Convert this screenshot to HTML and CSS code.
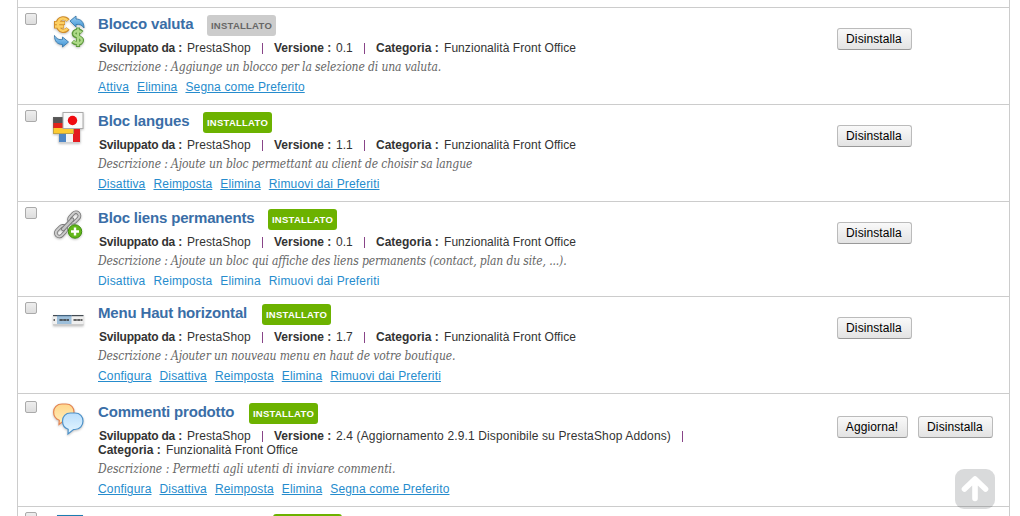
FILE: index.html
```
<!DOCTYPE html>
<html lang="it">
<head>
    <meta charset="UTF-8">
    <meta name="viewport" content="width=device-width, initial-scale=1.0">
    <title>Moduli</title>
    <link rel="stylesheet" href="styles.css">
</head>
<body>
    <div class="module-list">
        <div class="module first"></div>
        <div class="module">
            <input type="checkbox" class="check">
            <svg class="icon" viewBox="0 0 32 34">
                <defs>
                    <linearGradient id="blue" x1="0" y1="0" x2="0" y2="1"><stop offset="0" stop-color="#9bd0f5"/><stop offset="1" stop-color="#3f92d2"/></linearGradient>
                </defs>
                <g fill="none" stroke-linecap="butt">
                    <path d="M15 5.5C13.500 3.500 11.500 3 9.500 3.300C5.500 4 4.500 7 4.500 9.500S6 15.500 9.500 16C11.500 16.300 13.500 15.500 15 13.500M1 8H12M1 11.500H11" stroke="#cf8d2d" stroke-width="4"/>
                    <path d="M14.500 5.500C13 3.700 11.500 3.200 9.500 3.500C6 4 5 7 5 9.500S6.500 15.300 9.500 15.700C11.500 16 13 15.300 14.500 13.500M2 8H11.500M2 11.500H10.500" stroke="#fdd063" stroke-width="2.400"/>
                    <path d="M29 17.500C27.500 16 26 15.500 24.500 15.700C21.500 16 20.500 17.500 21 19.500C21.800 22 28.500 21.500 29 25C29.200 27.500 27 28.500 24.500 28.500C22.500 28.500 21 27.800 19.500 26.500M25 12.500V32" stroke="#5c983c" stroke-width="4.200"/>
                    <path d="M28.500 17.500C27.500 16.500 26 16 24.500 16C21.800 16.200 21 17.500 21.300 19.200C22 21.500 28.700 21.500 28.800 25C29 27.200 27 28.200 24.500 28.200C22.500 28.200 21.500 27.500 20 26.500M25 13.500V31" stroke="#add987" stroke-width="2.300"/>
                </g>
                <path d="M17 6L23 1V4C28 4 31 7 31 13C29 10 27 9 23 9.500V12Z" fill="url(#blue)" stroke="#3979ad" stroke-width=".9"/>
                <path d="M15.500 27L9.500 32V29.500C4 29.500 1.500 26 1.500 20.500C3.500 24 6 25 9.500 24.500V22Z" fill="url(#blue)" stroke="#3979ad" stroke-width=".9"/>
            </svg>
            <div class="info">
                <div class="head"><h3 class="t1">Blocco valuta</h3><span class="badge off">INSTALLATO</span></div>
                <p class="meta"><b class="dev">Sviluppato da :</b><span class="shop">PrestaShop</span><i class="sep"></i><b class="ver">Versione :</b><span class="num">0.1</span><i class="sep"></i><b class="cat">Categoria :</b><span class="front">Funzionalità Front Office</span></p>
                <p class="desc">Descrizione : Aggiunge un blocco per la selezione di una valuta.</p>
                <p class="links"><a href="#">Attiva</a><a href="#">Elimina</a><a href="#">Segna come Preferito</a></p>
            </div>
            <div class="actions"><button>Disinstalla</button></div>
        </div>
        <div class="module">
            <input type="checkbox" class="check">
            <svg class="icon" viewBox="0 0 32 34">
                <rect x="6" y="17" width="21" height="13.500" fill="#f4f4f4" stroke="#ccc" stroke-width=".7"/>
                <rect x="6" y="17" width="7" height="13" fill="#4f86c4"/>
                <rect x="20" y="17" width="7" height="13" fill="#e41c20"/>
                <rect x="0" y="5" width="21" height="6" fill="#555"/>
                <rect x="0" y="11" width="21" height="5" fill="#e2231a"/>
                <rect x="0" y="16" width="21" height="6" fill="#fccb32"/>
                <rect x=".5" y="5.500" width="20" height="16" fill="none" stroke="#666" stroke-opacity=".4"/>
                <rect x="10" y=".5" width="20" height="16" fill="#fafafa" stroke="#aaa"/>
                <circle cx="19.500" cy="8.500" r="4.700" fill="#f00a10"/>
            </svg>
            <div class="info">
                <div class="head"><h3 class="t2">Bloc langues</h3><span class="badge">INSTALLATO</span></div>
                <p class="meta"><b class="dev">Sviluppato da :</b><span class="shop">PrestaShop</span><i class="sep"></i><b class="ver">Versione :</b><span class="num">1.1</span><i class="sep"></i><b class="cat">Categoria :</b><span class="front">Funzionalità Front Office</span></p>
                <p class="desc">Descrizione : Ajoute un bloc permettant au client de choisir sa langue</p>
                <p class="links"><a href="#">Disattiva</a><a href="#">Reimposta</a><a href="#">Elimina</a><a href="#">Rimuovi dai Preferiti</a></p>
            </div>
            <div class="actions"><button>Disinstalla</button></div>
        </div>
        <div class="module short">
            <input type="checkbox" class="check">
            <svg class="icon" viewBox="0 0 32 34">
                <g fill="none" transform="rotate(-46 15 15)">
                    <g stroke="#777" stroke-width="3.600">
                        <rect x="-1" y="11.500" width="12" height="7" rx="3.500"/>
                        <rect x="18" y="11.500" width="12" height="7" rx="3.500"/>
                    </g>
                    <g stroke="#ccc" stroke-width="2">
                        <rect x="-1" y="11.500" width="12" height="7" rx="3.500"/>
                        <rect x="18" y="11.500" width="12" height="7" rx="3.500"/>
                    </g>
                    <path d="M8 15H21" stroke="#777" stroke-width="4.400" stroke-linecap="round"/>
                    <path d="M8 15H21" stroke="#c4c4c4" stroke-width="2.600" stroke-linecap="round"/>
                </g>
                <circle cx="22" cy="22.500" r="6.700" fill="#62b719" stroke="#3f8d10"/>
                <path d="M22 18.500V26.500M18 22.500H26" stroke="#fff" stroke-width="2.400"/>
            </svg>
            <div class="info">
                <div class="head"><h3 class="t3">Bloc liens permanents</h3><span class="badge">INSTALLATO</span></div>
                <p class="meta"><b class="dev">Sviluppato da :</b><span class="shop">PrestaShop</span><i class="sep"></i><b class="ver">Versione :</b><span class="num">0.1</span><i class="sep"></i><b class="cat">Categoria :</b><span class="front">Funzionalità Front Office</span></p>
                <p class="desc">Descrizione : Ajoute un bloc qui affiche des liens permanents (contact, plan du site, ...).</p>
                <p class="links plain"><a href="#">Disattiva</a><a href="#">Reimposta</a><a href="#">Elimina</a><a href="#">Rimuovi dai Preferiti</a></p>
            </div>
            <div class="actions"><button>Disinstalla</button></div>
        </div>
        <div class="module">
            <input type="checkbox" class="check">
            <svg class="icon" viewBox="0 0 32 34">
                <rect x="0" y="19.500" width="30.500" height="2" fill="#ccc"/>
                <rect x="0" y="11" width="30.500" height="9" fill="#efefef"/>
                <rect x="0" y="11" width="30.500" height="1.200" fill="#444b52"/>
                <rect x="4" y="11" width="14.500" height="9" fill="#9dbfda"/>
                <rect x="4" y="11" width="14.500" height="1.200" fill="#43627d"/>
                <path d="M.5 16H2M6.500 16H16M20.500 16H29.500" stroke="#333" stroke-width="1.500" stroke-dasharray="3.300 .4"/>
            </svg>
            <div class="info">
                <div class="head"><h3 class="t4">Menu Haut horizontal</h3><span class="badge">INSTALLATO</span></div>
                <p class="meta"><b class="dev">Sviluppato da :</b><span class="shop">PrestaShop</span><i class="sep"></i><b class="ver">Versione :</b><span class="num">1.7</span><i class="sep"></i><b class="cat">Categoria :</b><span class="front">Funzionalità Front Office</span></p>
                <p class="desc">Descrizione : Ajouter un nouveau menu en haut de votre boutique.</p>
                <p class="links"><a href="#">Configura</a><a href="#">Disattiva</a><a href="#">Reimposta</a><a href="#">Elimina</a><a href="#">Rimuovi dai Preferiti</a></p>
            </div>
            <div class="actions"><button>Disinstalla</button></div>
        </div>
        <div class="module tall">
            <input type="checkbox" class="check">
            <svg class="icon" viewBox="0 0 32 34">
                <defs>
                    <linearGradient id="orange" x1="0" y1="0" x2="0" y2="1"><stop offset="0" stop-color="#ffd68c"/><stop offset="1" stop-color="#fff0bd"/></linearGradient>
                    <linearGradient id="sky" x1="0" y1="0" x2="0" y2="1"><stop offset="0" stop-color="#b9defc"/><stop offset="1" stop-color="#e6f7ff"/></linearGradient>
                </defs>
                <path d="M9 1H13C18 1 21 4.500 21 9S18 17.500 13 17.500H11L6 21.500L6.300 17.300C3 16 .6 13 .6 9C.6 4.500 4 1 9 1Z" fill="url(#orange)" stroke="#e58552" stroke-width="1.200"/>
                <path d="M17.500 10H22C27 10 30 13.500 30 18S27 26.500 22 26.500H20.500L15 31L15.200 26.300C11.500 25 9.500 22 9.500 18C9.500 13.500 12.500 10 17.500 10Z" fill="url(#sky)" stroke="#4d92c9" stroke-width="1.200"/>
            </svg>
            <div class="info">
                <div class="head"><h3 class="t5">Commenti prodotto</h3><span class="badge">INSTALLATO</span></div>
                <p class="meta"><b class="dev">Sviluppato da :</b><span class="shop">PrestaShop</span><i class="sep"></i><b class="ver">Versione :</b><span class="update">2.4 (Aggiornamento 2.9.1 Disponibile su PrestaShop Addons)</span><i class="sep"></i></p>
                <p class="meta second"><b class="cat">Categoria :</b><span class="front">Funzionalità Front Office</span></p>
                <p class="desc">Descrizione : Permetti agli utenti di inviare commenti.</p>
                <p class="links"><a href="#">Configura</a><a href="#">Disattiva</a><a href="#">Reimposta</a><a href="#">Elimina</a><a href="#">Segna come Preferito</a></p>
            </div>
            <div class="actions"><button class="upd">Aggiorna!</button><button>Disinstalla</button></div>
        </div>
        <div class="module last">
            <input type="checkbox" class="check">
            <svg class="icon" viewBox="0 0 32 34"><rect x="4" y="1" width="26" height="26" fill="#1c7db1"/></svg>
            <div class="info">
                <div class="head next"><span class="badge"></span></div>
            </div>
        </div>
    </div>
    <a class="to-top" href="#">
        <svg viewBox="0 0 40 40"><path d="M20 29.500V11M9.500 20L20 10L30.500 20" fill="none" stroke="#fff" stroke-width="5.600" stroke-linecap="round" stroke-linejoin="round"/></svg>
    </a>
</body>
</html>
```
FILE: styles.css
```
body {
    margin: 0;
    background: #fff;
    font-family: "Liberation Sans", Arial, sans-serif;
    font-size: 12px;
    color: #333;
}
.module-list {
    width: 991px;
    margin-left: 17px;
    border: 1px solid #ccc;
    border-width: 0 1px;
}
.module {
    display: flex;
    align-items: flex-start;
    box-sizing: border-box;
    height: 97px;
    border-bottom: 1px solid #ccc;
}
.module.first {
    height: 8px;
}
.module.short {
    height: 95px;
}
.module.tall {
    height: 113px;
    padding-top: 2px;
}
.module.last {
    height: 9px;
    overflow: hidden;
    border-bottom: 0;
}
.check {
    appearance: none;
    box-sizing: border-box;
    width: 12px;
    height: 12px;
    margin: 5px 0 0 7px;
    border: 1px solid #aaa;
    border-radius: 2px;
    background: linear-gradient(#eee, #ddd);
}
.icon {
    width: 32px;
    height: 34px;
    margin: 7px 0 0 16px;
    filter: drop-shadow(0 1px 1px rgba(0, 0, 0, .25));
}
.info {
    width: 739px;
    margin-left: 13px;
    padding-top: 7px;
}
.head {
    display: flex;
    align-items: flex-start;
    height: 21px;
}
.head.next {
    padding-left: 175px;
}
h3 {
    margin: 0 14px 0 0;
    font-size: 15px;
    line-height: 18px;
    letter-spacing: -.17px;
    color: #3a6ea7;
    white-space: nowrap;
}
.t1 {
    width: 95px;
}
.t2 {
    width: 91px;
}
.t3 {
    width: 156px;
}
.t4 {
    width: 150px;
}
.t5 {
    width: 137px;
}
.badge {
    width: 69px;
    height: 21px;
    border-radius: 3px;
    background: #6cb200;
    color: #fff;
    font-size: 9.5px;
    font-weight: bold;
    line-height: 22px;
    letter-spacing: .25px;
    text-align: center;
}
.badge.off {
    background: #ccc;
    color: #666;
}
p {
    margin: 0;
    white-space: nowrap;
}
.meta {
    display: flex;
    margin-top: 5px;
    padding-left: 1px;
    line-height: 14px;
}
.meta.second {
    margin-top: 0;
    padding-left: 0;
}
.meta b {
    margin-right: 5px;
}
.dev {
    width: 83px;
    letter-spacing: -.2px;
}
.ver {
    width: 57px;
}
.cat {
    width: 63px;
}
.shop {
    width: 64px;
    letter-spacing: .1px;
}
.num {
    width: 17px;
}
.front {
    letter-spacing: .06px;
}
.update {
    width: 335px;
    letter-spacing: .14px;
}
.sep {
    width: 1px;
    height: 11px;
    margin: 2px 11px 0 11px;
    background: #884488;
}
.desc {
    margin-top: 4px;
    height: 16px;
    color: #666;
    font-family: "DejaVu Serif Condensed", "DejaVu Serif", serif;
    font-size: 12px;
    font-style: italic;
    line-height: 16px;
    letter-spacing: -.12px;
}
.tall .desc {
    letter-spacing: 0;
}
.links {
    display: flex;
    gap: 8px;
    margin-top: 5px;
    line-height: 14px;
    letter-spacing: .16px;
}
.links a {
    color: #268ccd;
}
.links.plain a {
    text-decoration: none;
}
.actions {
    display: flex;
    gap: 10px;
    padding-top: 20px;
}
button {
    box-sizing: border-box;
    width: 75px;
    height: 22px;
    padding: 0 1px 0 0;
    border: 1px solid #bbb;
    border-bottom-color: #999;
    border-radius: 3px;
    background: linear-gradient(#f9f9f9, #e3e3e3);
    color: #000;
    font-family: "Liberation Sans", Arial, sans-serif;
    font-size: 12px;
    letter-spacing: .1px;
    white-space: nowrap;
}
.upd {
    width: 71px;
}
.to-top {
    position: fixed;
    left: 955px;
    top: 469px;
    width: 40px;
    height: 40px;
    border-radius: 9px;
    background: rgba(55, 60, 65, .19);
}
```
